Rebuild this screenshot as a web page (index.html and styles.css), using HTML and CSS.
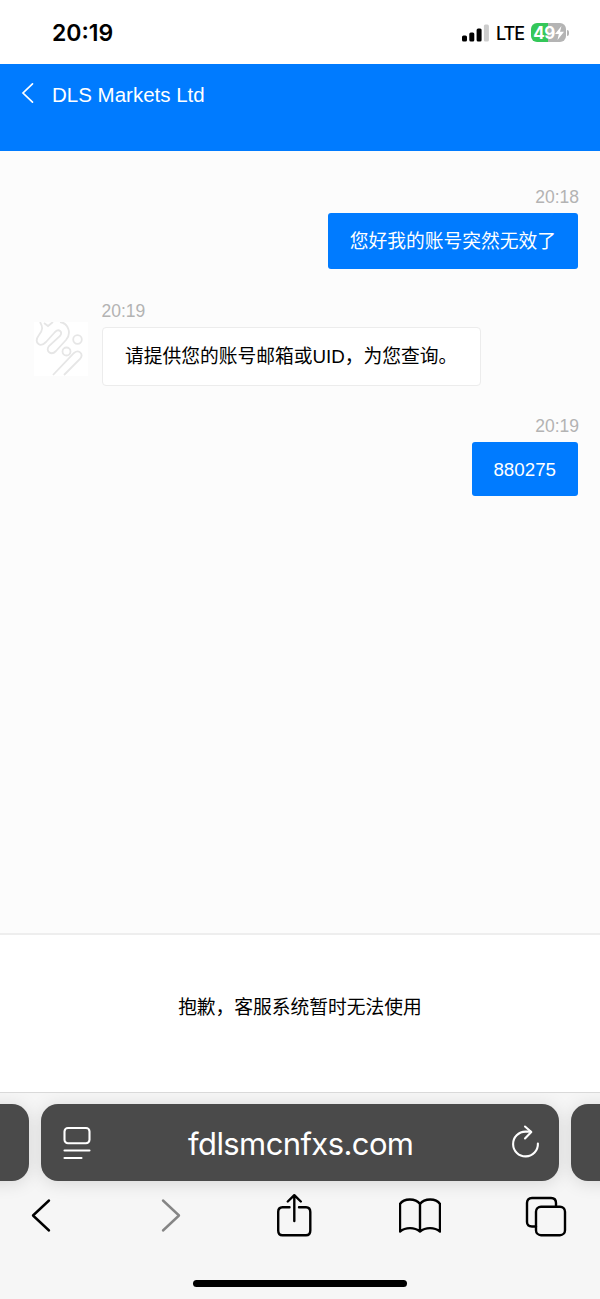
FILE: index.html
```html
<!DOCTYPE html>
<html lang="zh-CN">

<head>
  <meta charset="UTF-8">
  <title>DLS Markets Ltd</title>
  <link rel="stylesheet" href="styles.css">
</head>

<body>
  <div class="status-bar">
    <span class="clock">20:19</span>
    <div class="status-right">
      <svg class="signal" width="28" height="18" viewBox="0 0 28 18">
        <rect x="0" y="11.5" width="5" height="6" rx="1.5" />
        <rect x="7.3" y="8.5" width="5" height="9" rx="1.5" />
        <rect x="14.6" y="4.5" width="5" height="13" rx="1.5" />
        <rect x="21.9" y="0.5" width="5" height="17" rx="1.5" fill="#ccc" />
      </svg>
      <span class="network">LTE</span>
      <div class="battery">
        <span>49</span>
        <svg width="9" height="14" viewBox="0 0 9 14">
          <path d="M6.500 0L0 8H3.800L2.500 14L9 5.800H5Z" fill="#fff" />
        </svg>
      </div>
      <div class="battery-tip"></div>
    </div>
  </div>

  <div class="header">
    <svg width="14" height="22" viewBox="0 0 14 22">
      <path d="M12.500 1.800L3 11L12.500 20.200" fill="none" stroke="#fff" stroke-width="1.700" stroke-linecap="round" />
    </svg>
    <h1>DLS Markets Ltd</h1>
  </div>

  <div class="chat">
    <div class="message sent">
      <span class="time">20:18</span>
      <div class="bubble">您好我的账号突然无效了</div>
    </div>

    <div class="message received">
      <svg class="avatar" width="54" height="54" viewBox="0 0 54 54">
        <rect width="54" height="54" fill="#fff" />
        <g fill="none" stroke="#e6e6e6" stroke-width="1.8">
          <path d="M6 0C9 5 9 8 5 13C2 17 2 20 4.500 22C7 24 10 22 12 20L21 10C25 6 29 10 26 14L15 24C11 29 17 34 22 29L32 18C38 11 34 1 26 0" />
          <path d="M10 1L14 4L19 0" />
          <circle cx="43.500" cy="17.500" r="4.300" />
          <circle cx="32.500" cy="29.500" r="4" />
          <path d="M19 53L40 31C45 27 50 32 46 37L30 53" />
        </g>
      </svg>
      <div class="message-body">
        <span class="time">20:19</span>
        <div class="bubble">请提供您的账号邮箱或UID，为您查询。</div>
      </div>
    </div>

    <div class="message sent">
      <span class="time">20:19</span>
      <div class="bubble number">880275</div>
    </div>
  </div>

  <div class="notice">抱歉，客服系统暂时无法使用</div>

  <div class="browser">
    <div class="tabs">
      <div class="pill"></div>
      <div class="pill">
        <svg width="30" height="36" viewBox="0 0 30 36" fill="none" stroke="#fff" stroke-width="2.1" stroke-linecap="round">
          <rect x="2.5" y="3" width="25" height="15.200" rx="3.500" />
          <path d="M2.500 25.500H27.500M2.500 33H19.500" />
        </svg>
        <span class="url">fdlsmcnfxs.com</span>
        <svg width="30" height="36" viewBox="0 0 30 36" fill="none" stroke="#fff" stroke-width="2.100" stroke-linecap="round" stroke-linejoin="round">
          <path d="M27.900 18.500A12.400 12.400 0 1 1 15.500 6.600H20.500" />
          <path d="M15 1.500L21.300 7L15 13.500" />
        </svg>
      </div>
      <div class="pill"></div>
    </div>

    <div class="toolbar">
      <svg viewBox="0 0 42 44">
        <path d="M29 6.500L13 21.500L29 36.500" />
      </svg>
      <svg class="disabled" viewBox="0 0 42 44">
        <path d="M17 6.500L33 21.500L17 36.500" />
      </svg>
      <svg viewBox="0 0 42 44">
        <path d="M16.500 13.200H9.500Q5.200 13.200 5.200 18V36.500Q5.200 41.300 9.500 41.300H33Q37.300 41.300 37.300 36.500V18Q37.300 13.200 33 13.200H26" />
        <path d="M21.300 27V1.500M14.800 7.500L21.300 1.200L27.800 7.500" />
      </svg>
      <svg viewBox="0 0 42 44">
        <path d="M21 37.500V10C16.500 4 5 4 1 10V37.500C6.500 33 15.500 33 21 37.500C26.500 33 35.500 33 41 37.500V10C37 4 25.500 4 21 10" />
      </svg>
      <svg viewBox="0 0 42 44">
        <path d="M11 32.500H7Q2 32.500 2 28V9Q2 4 7 4H26Q31 4 31 9V12" />
        <rect x="11" y="12.700" width="29" height="28.500" rx="5" />
      </svg>
    </div>

    <div class="home-bar"></div>
  </div>
</body>

</html>
```
FILE: styles.css
```css
* {
  margin: 0;
  padding: 0;
  box-sizing: border-box;
}

body {
  height: 1299px;
  display: flex;
  flex-direction: column;
  overflow: hidden;
  background-color: #fff;
  font-family: "Liberation Sans", "Noto Sans CJK SC", sans-serif;
  font-size: 18.75px;
  color: #000;
}

svg {
  flex: none;
  display: block;
}

.status-bar {
  height: 64px;
  padding: 0 31px 0 52px;
  display: flex;
  align-items: center;
  justify-content: space-between;
  font-family: Inter, sans-serif;
}

.clock {
  font-size: 23px;
  font-weight: 600;
  padding-top: 2px;
}

.status-right {
  display: flex;
  align-items: center;
  padding-top: 1px;
}

.network {
  margin: 2px 7px 0 6px;
  font-size: 18px;
  font-weight: 500;
  letter-spacing: -1px;
}

.battery {
  width: 35px;
  height: 19px;
  display: flex;
  align-items: center;
  justify-content: center;
  border-radius: 6px;
  background: linear-gradient(to right, #34c759 49%, #b4b4b4 49%);
  color: #fff;
  font-size: 17px;
  font-weight: 700;
  letter-spacing: -0.5px;
}

.battery-tip {
  width: 2px;
  height: 6px;
  margin-left: 1px;
  border-radius: 0 2px 2px 0;
  background-color: #b4b4b4;
}

.header {
  height: 87px;
  padding: 18px 20px 0;
  display: flex;
  align-items: flex-start;
  background-color: #007bff;
  color: #fff;
}

.header h1 {
  margin-left: 18px;
  font-size: 20.5px;
  font-weight: 400;
  line-height: 25px;
}

.chat {
  flex: 1;
  padding: 36px 22px 0;
  background-color: #fcfcfc;
}

.message {
  display: flex;
}

.sent {
  flex-direction: column;
  align-items: flex-end;
}

.time {
  display: block;
  height: 26px;
  line-height: 21px;
  font-size: 17.5px;
  color: #b3b3b3;
}

.sent .time {
  margin-right: -1px;
}

.bubble {
  width: fit-content;
  height: 56px;
  padding: 0 22px;
  line-height: 58px;
  border-radius: 3px;
  white-space: nowrap;
}

.sent .bubble {
  background-color: #007bff;
  color: #fff;
}

.sent .number {
  height: 54px;
  padding: 0 22px 0 21.5px;
  line-height: 55px;
}

.received {
  margin: 32px 0 30px;
  padding-left: 12px;
}

.received .bubble {
  height: 59px;
  padding: 0 22.5px;
  line-height: 57px;
  border: 1px solid #ececec;
  border-radius: 4px;
  background-color: #fff;
}

.avatar {
  margin: 21px 13.5px 0 0;
}

.notice {
  height: 159px;
  border-top: 2px solid #eee;
  line-height: 145px;
  text-align: center;
}

.browser {
  height: 207px;
  padding-top: 11px;
  overflow: hidden;
  border-top: 1px solid #d9d9d9;
  background-color: #f6f6f6;
}

.tabs {
  display: flex;
  justify-content: center;
  gap: 12px;
}

.pill {
  flex: none;
  width: 518px;
  height: 77px;
  padding: 0 19px 0 20.5px;
  display: flex;
  align-items: center;
  justify-content: space-between;
  border-radius: 17px;
  background-color: #4a4a4a;
  box-shadow: 0 2px 18px rgba(0, 0, 0, 0.13);
  color: #fff;
}

.url {
  padding-top: 1px;
  font-family: Inter, sans-serif;
  font-size: 31px;
  letter-spacing: -0.6px;
}

.toolbar {
  margin-top: 13px;
  padding: 0 33px 0 20px;
  display: flex;
  justify-content: space-between;
}

.toolbar svg {
  width: 42px;
  height: 44px;
  fill: none;
  stroke: #000;
  stroke-width: 2.4;
  stroke-linecap: round;
  stroke-linejoin: round;
}

.toolbar .disabled {
  stroke: #858585;
}

.home-bar {
  width: 214px;
  height: 7px;
  margin: 42px auto 0;
  border-radius: 4px;
  background-color: #000;
}
```
